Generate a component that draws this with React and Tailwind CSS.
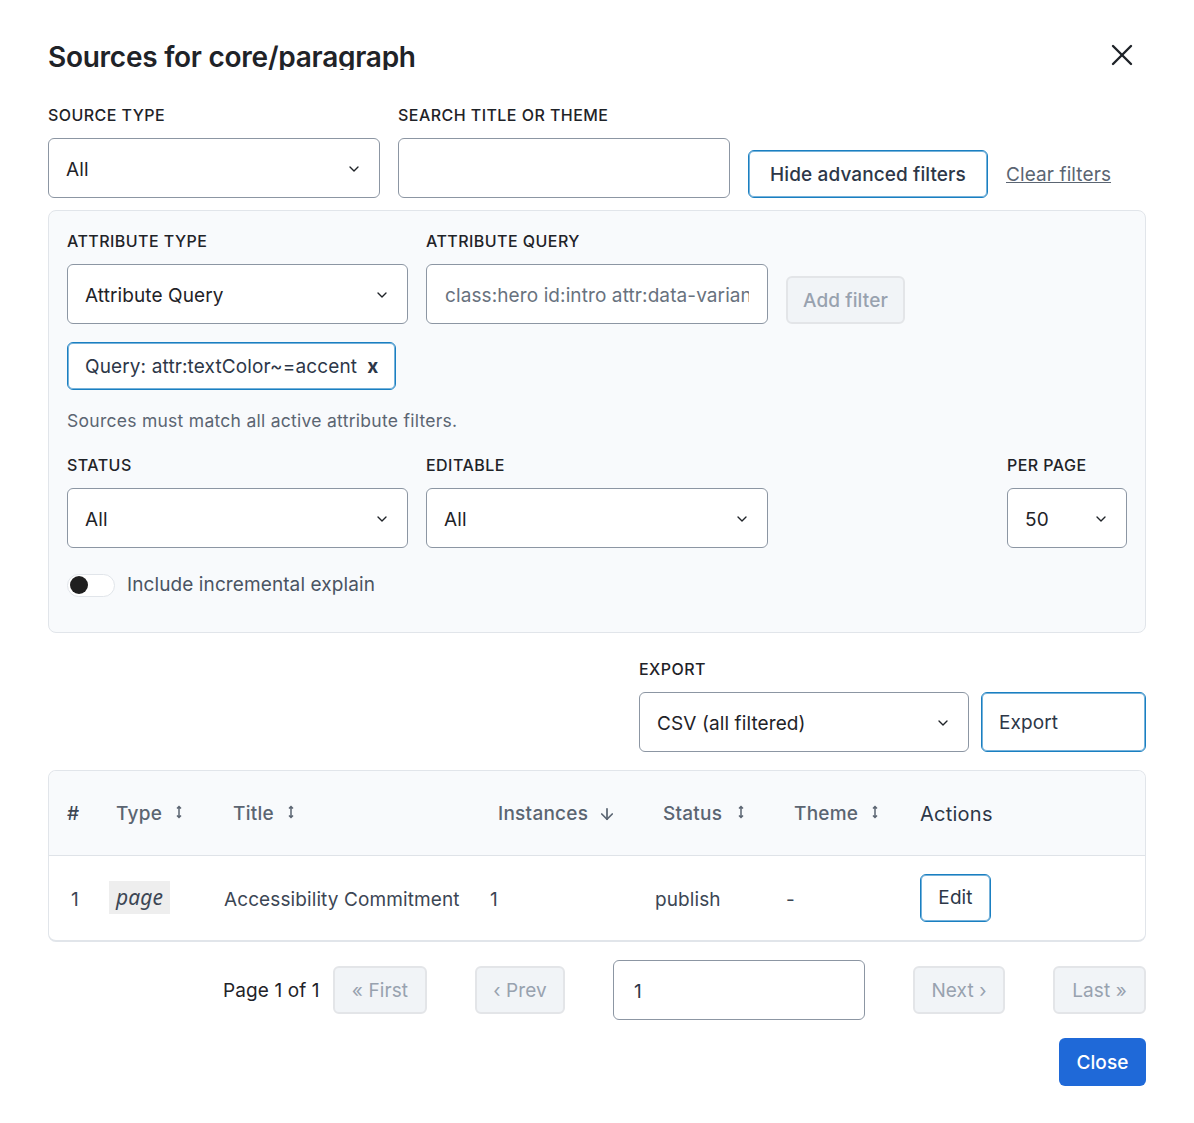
import React from "react";
import { ChevronDown, ArrowDown, X } from "lucide-react";

const labelClass = "block text-[16px] leading-[20px] font-medium text-[#1f2328] tracking-[0.45px] mb-[13px]";
const boxClass = "h-[60px] bg-white border border-[#8c96a3] rounded-[6px] text-[19px] text-[#1f2328]";
const accentClass = "bg-white border border-[#1a7fc1] shadow-[inset_0_0_0_1px_rgba(26,127,193,0.6)] rounded-[6px]";

const Select = ({ value, className = "" }) => (
  <div className={`${boxClass} flex items-center justify-between pl-[17px] pr-[17px] ${className}`}>
    <span className="pt-[4px]">{value}</span>
    <ChevronDown className="w-[16px] h-[16px] mt-[2px] text-[#1f2328]" strokeWidth={2} />
  </div>
);

const Field = ({ label, children, className = "" }) => (
  <div className={className}>
    <label className={labelClass}>{label}</label>
    {children}
  </div>
);

const SortIcon = ({ className = "ml-[12px]" }) => (
  <svg className={`inline-block w-[10px] h-[16px] text-[#5b6572] mb-[5px] ${className}`} viewBox="0 0 10 16" fill="none" stroke="currentColor" strokeWidth="1.5">
    <path d="M5 2.5v11M3 4.5 5 2.5l2 2M3 11.5l2 2 2-2" />
  </svg>
);

const PagerButton = ({ children, className = "" }) => (
  <button className={`h-[48px] pt-[2px] bg-[#f1f4f7] border-2 border-[#e3e5e8] rounded-[6px] text-[19px] text-[#98a2af] ${className}`}>
    {children}
  </button>
);

const columns = [
  { name: "Type", cls: "pl-[17px]", sort: "ml-[12px]" },
  { name: "Title", cls: "pl-[18px]", sort: "ml-[12px]" },
  { name: "Instances", cls: "pl-[17px]" },
  { name: "Status", cls: "pl-[17px]", sort: "ml-[14px]" },
  { name: "Theme", cls: "pl-[17px]", sort: "ml-[12px]" },
];

export default function App() {
  return (
    <div className="w-[1194px] h-[1123px] bg-white px-[48px] pt-[39px] font-['Inter',sans-serif] tracking-[0.1px]">
      {/* Header */}
      <div className="flex items-start justify-between h-[66px]">
        <h1 className="text-[28px] leading-[36px] h-[31px] overflow-hidden font-semibold text-[#1f2328] tracking-[-0.26px]">
          Sources for core/paragraph
        </h1>
        <X className="w-[36px] h-[36px] mr-[6px] -mt-[2px] text-[#1f2328]" strokeWidth={1.6} />
      </div>

      {/* Top filters */}
      <div className="flex items-end">
        <Field label="SOURCE TYPE" className="w-[332px] mr-[18px]">
          <Select value="All" />
        </Field>
        <Field label="SEARCH TITLE OR THEME" className="w-[332px] mr-[18px]">
          <input className={`${boxClass} w-full px-[18px] outline-none`} />
        </Field>
        <button className={`${accentClass} w-[240px] h-[48px] pt-[2px] text-[19px] font-medium text-[#2d3748] mr-[18px]`}>
          Hide advanced filters
        </button>
        <a className="mb-[11px] text-[19px] leading-[24px] text-[#5b6572] underline">Clear filters</a>
      </div>

      {/* Advanced panel */}
      <div className="mt-[12px] h-[423px] bg-[#f8fafc] border border-[#e1e5ea] rounded-[8px] px-[18px] pt-[20px]">
        <div className="flex items-end">
          <Field label="ATTRIBUTE TYPE" className="w-[341px] mr-[18px]">
            <Select value="Attribute Query" />
          </Field>
          <Field label="ATTRIBUTE QUERY" className="w-[342px] mr-[18px]">
            <input
              className={`${boxClass} w-full pl-[18px] pr-[18px] pt-[3px] outline-none placeholder:text-[#68727e]`}
              placeholder="class:hero id:intro attr:data-variant"
            />
          </Field>
          <button className="w-[119px] h-[48px] pt-[2px] bg-[#f1f4f7] border-2 border-[#e3e5e8] rounded-[6px] text-[19px] font-medium text-[#98a2af]">
            Add filter
          </button>
        </div>
        <div className={`${accentClass} mt-[18px] w-[329px] h-[48px] pt-[2px] flex items-center pl-[17px] text-[19px] text-[#2d3748] whitespace-nowrap tracking-[0.13px]`}>
          Query: attr:textColor~=accent
          <span className="ml-[10px] font-bold">x</span>
        </div>
        <p className="mt-[20px] text-[17.5px] leading-[22px] tracking-[0.27px] text-[#5b6572]">Sources must match all active attribute filters.</p>
        <div className="flex mt-[23px]">
          <Field label="STATUS" className="w-[341px] mr-[18px]">
            <Select value="All" />
          </Field>
          <Field label="EDITABLE" className="w-[342px]">
            <Select value="All" />
          </Field>
          <Field label="PER PAGE" className="w-[120px] ml-auto">
            <Select value="50" />
          </Field>
        </div>
        <div className="flex items-center mt-[25px]">
          <span className="w-[48px] h-[23px] bg-white border border-[#e1e5ea] rounded-full flex items-center pl-[2px]">
            <span className="w-[18px] h-[18px] bg-[#1f1f1f] rounded-full" />
          </span>
          <span className="ml-[12px] text-[19px] leading-[24px] text-[#4a5462]">Include incremental explain</span>
        </div>
      </div>

      {/* Export */}
      <div className="flex justify-end items-end mt-[26px]">
        <Field label="EXPORT" className="w-[330px] mr-[12px]">
          <Select value="CSV (all filtered)" />
        </Field>
        <button className={`${accentClass} w-[165px] h-[60px] pt-[2px] text-left pl-[17px] text-[19px] text-[#2d3748]`}>
          Export
        </button>
      </div>

      {/* Table */}
      <div className="mt-[18px] border border-[#e1e5ea] border-b-2 rounded-[8px] overflow-hidden">
        <table className="w-full table-fixed border-collapse">
          <colgroup>
            <col className="w-[50px]" />
            <col className="w-[116px]" />
            <col className="w-[266px]" />
            <col className="w-[165px]" />
            <col className="w-[131px]" />
            <col className="w-[134px]" />
            <col />
          </colgroup>
          <thead>
            <tr className="h-[84px] bg-[#f8fafc] border-b border-[#dfe3e8] text-left text-[19px] tracking-[0.25px]">
              <th className="pl-[18px] pt-[3px] font-medium text-[#3c4654]">#</th>
              {columns.map((col) => (
                <th key={col.name} className={`${col.cls} pt-[3px] font-medium text-[#5b6572] whitespace-nowrap`}>
                  {col.name}
                  {col.sort && <SortIcon className={col.sort} />}
                  {col.name === "Instances" && (
                    <ArrowDown className="inline-block w-[18px] h-[18px] ml-[10px] mb-[2px] text-[#5b6572]" strokeWidth={2.3} />
                  )}
                </th>
              ))}
              <th className="pl-[9px] pt-[3px] text-[20px] font-normal text-[#2d3748]">Actions</th>
            </tr>
          </thead>
          <tbody>
            <tr className="h-[85px] text-[19px] text-[#3c4654]">
              <td className="pl-[22px] pt-[4px]">1</td>
              <td className="pl-[10px]">
                <span className="inline-flex items-center justify-center w-[61px] h-[33px] bg-[#eeeeee] font-['Noto_Sans',sans-serif] text-[21px] italic">page</span>
              </td>
              <td className="pl-[9px] pt-[4px] whitespace-nowrap">Accessibility Commitment</td>
              <td className="pl-[9px] pt-[4px]">1</td>
              <td className="pl-[9px] pt-[4px]">publish</td>
              <td className="pl-[9px] pt-[4px]">-</td>
              <td className="pl-[9px]">
                <button className={`${accentClass} w-[71px] h-[48px] text-[#2d3748]`}>Edit</button>
              </td>
            </tr>
          </tbody>
        </table>
      </div>

      {/* Pagination */}
      <div className="flex items-center mt-[18px] h-[60px]">
        <span className="w-[98px] ml-[175px] mr-[12px] pt-[3px] text-[19px] text-[#1f2328] whitespace-nowrap">Page 1 of 1</span>
        <PagerButton className="w-[94px] mr-[48px]">« First</PagerButton>
        <PagerButton className="w-[90px] mr-[48px]">‹ Prev</PagerButton>
        <input
          readOnly
          value="1"
          className={`${boxClass} w-[252px] mr-[48px] pl-[20px] pt-[3px] outline-none text-[#2d3748]`}
        />
        <PagerButton className="w-[92px] mr-[48px]">Next ›</PagerButton>
        <PagerButton className="w-[93px]">Last »</PagerButton>
      </div>
      <div className="flex justify-end mt-[18px]">
        <button className="w-[87px] h-[48px] pt-[2px] bg-[#1f69d8] rounded-[6px] text-[19px] font-medium text-white">Close</button>
      </div>
    </div>
  );
}
